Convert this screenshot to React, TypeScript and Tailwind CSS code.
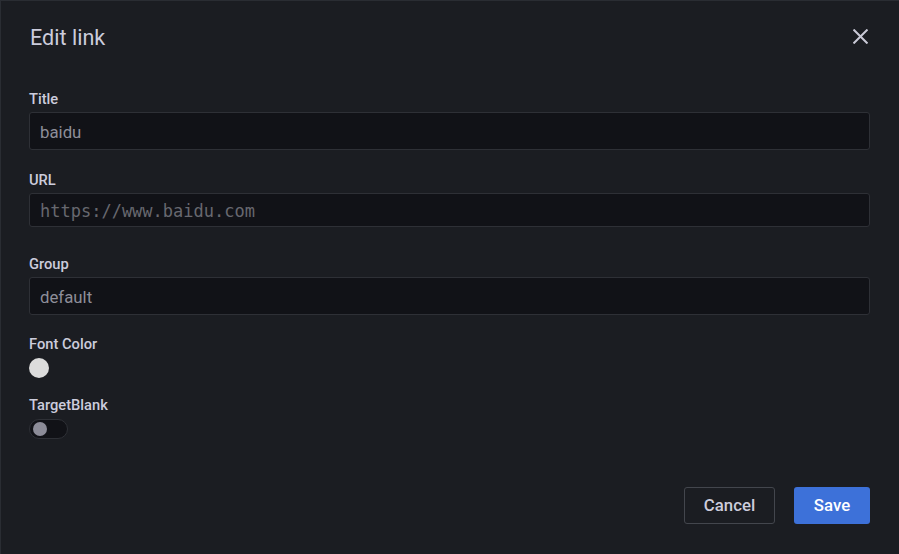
import React from "react";

function Label({ children }: { children: React.ReactNode }) {
  return (
    <div className="h-[17px] text-[14.7px] leading-[17px] font-medium text-[#ccccdc]">
      {children}
    </div>
  );
}

export default function App() {
  return (
    <div
      className="w-[899px] h-[554px] overflow-hidden bg-[#1b1d22] border-t border-l border-[#2a2d33] box-border"
      style={{ fontFamily: "Roboto, 'Noto Sans', sans-serif" }}
    >
      <div className="pl-[28px] pr-[29px]">
        {/* Header */}
        <div className="flex items-start justify-between pt-[23px]">
          <div className="pl-px h-[28px] text-[21.6px] leading-[28px] text-[#ccccdc]">Edit link</div>
          <button className="mt-[3px] mr-[1px] w-[18px] h-[18px] flex items-center justify-center text-[#c9c9d6]">
            <svg width="15" height="15" viewBox="0 0 15 15" fill="none">
              <path d="M1.25 1.25L13.75 13.75M13.75 1.25L1.25 13.75" stroke="currentColor" strokeWidth="2" strokeLinecap="square" />
            </svg>
          </button>
        </div>

        {/* Title */}
        <div className="mt-[39px]">
          <Label>Title</Label>
        </div>
        <div className="mt-[4px] h-[38px] rounded-[3px] border border-[#2e3036] bg-[#111217] flex items-center px-[10px] pt-[3px] text-[16.8px] text-[#8e8e99]">
          baidu
        </div>

        {/* URL */}
        <div className="mt-[22px]">
          <Label>URL</Label>
        </div>
        <div
          className="mt-[4px] h-[34px] rounded-[3px] border border-[#2e3036] bg-[#111217] flex items-center px-[10px] pt-[4px] text-[17px] text-[#67686f]"
          style={{ fontFamily: "'DejaVu Sans Mono', 'Liberation Mono', monospace" }}
        >
          https://www.baidu.com
        </div>

        {/* Group */}
        <div className="mt-[29px]">
          <Label>Group</Label>
        </div>
        <div className="mt-[4px] h-[38px] rounded-[3px] border border-[#2e3036] bg-[#111217] flex items-center px-[10px] pt-[3px] text-[16.8px] text-[#8e8e99]">
          default
        </div>

        {/* Font Color */}
        <div className="mt-[21px]">
          <Label>Font Color</Label>
        </div>
        <div className="mt-[5px] w-[20px] h-[20px] rounded-full bg-[#dcdcdc]" />

        {/* TargetBlank */}
        <div className="mt-[19px]">
          <Label>TargetBlank</Label>
        </div>
        <div className="mt-[5px] w-[39px] h-[20px] rounded-full border border-[#2e3036] bg-[#111217] flex items-center px-[3px]">
          <div className="w-[14px] h-[14px] rounded-full bg-[#8c8c98]" />
        </div>

        {/* Footer */}
        <div className="mt-[48px] flex justify-end gap-[19px]">
          <button className="w-[91px] h-[37px] rounded-[3px] border border-[#43464d] bg-transparent text-[16.8px] font-medium text-[#ccccdc]">
            Cancel
          </button>
          <button className="w-[76px] h-[37px] rounded-[3px] bg-[#3d71d9] text-[16.8px] font-medium text-white">
            Save
          </button>
        </div>
      </div>
    </div>
  );
}
